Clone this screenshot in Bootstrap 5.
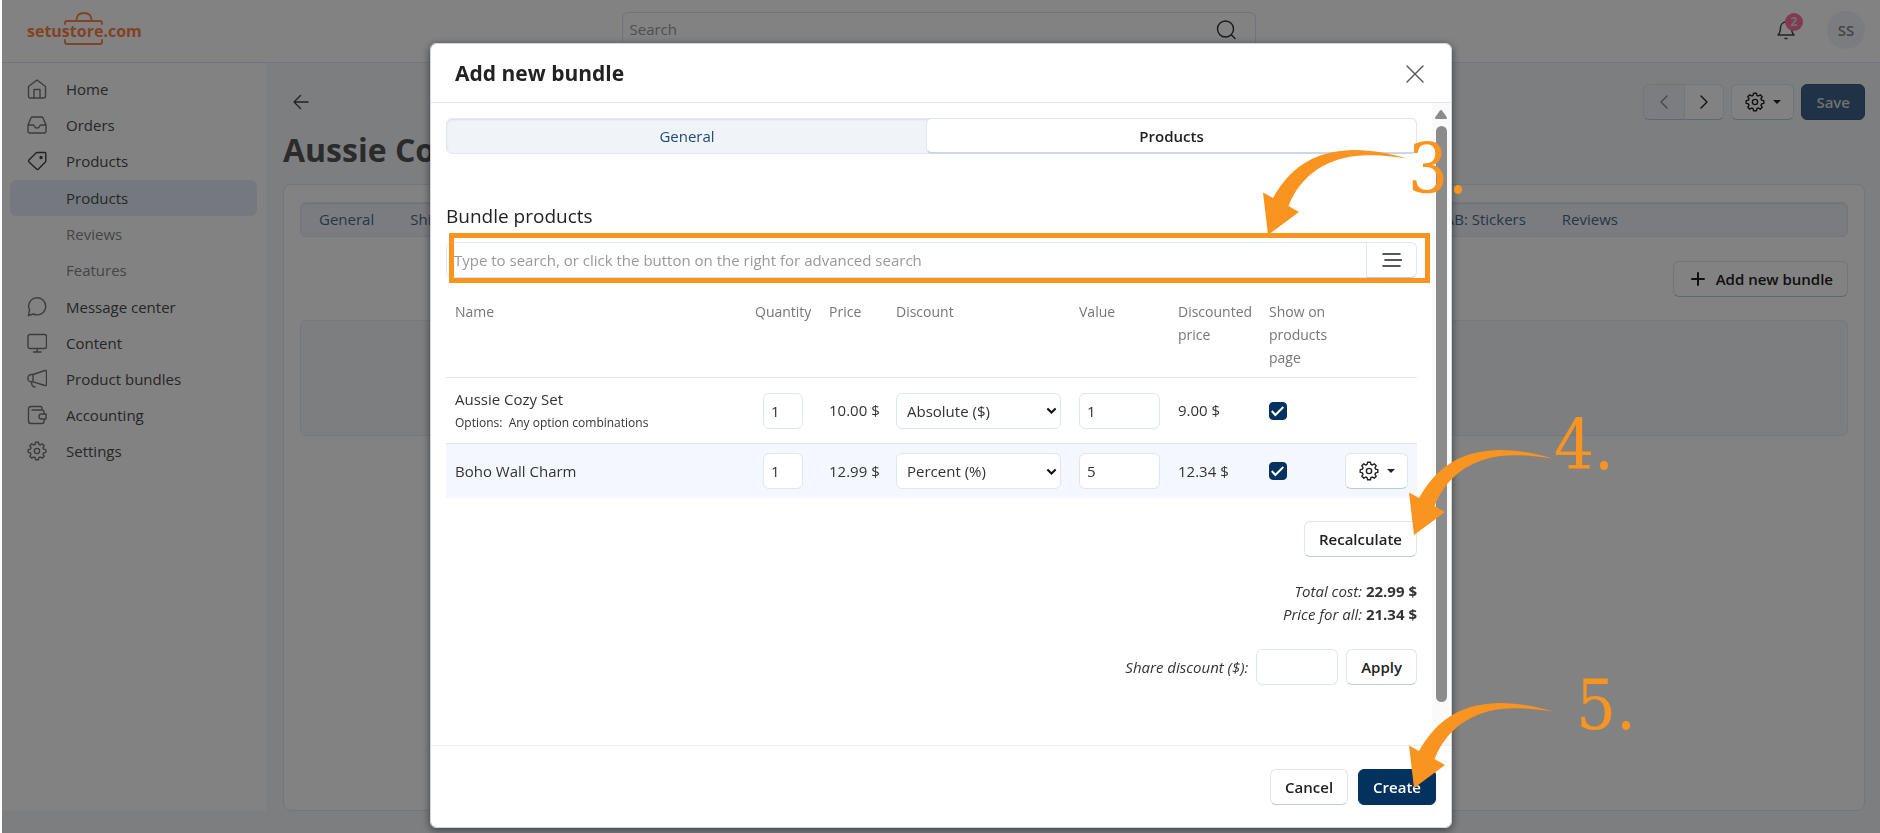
<!DOCTYPE html>
<html lang="en">
<head>
<meta charset="utf-8">
<meta name="viewport" content="width=device-width, initial-scale=1">
<title>Add new bundle</title>
<link href="https://cdn.jsdelivr.net/npm/bootstrap@5.3.0/dist/css/bootstrap.min.css" rel="stylesheet">
<style>
body{font-family:"Open Sans","Noto Sans",sans-serif;font-size:15px;line-height:23px;color:#333;background:#fff;padding-left:2px;overflow:hidden}
a{text-decoration:none}
.ico{width:20px;height:20px;fill:none;stroke:currentColor;stroke-width:1.4;stroke-linecap:round;stroke-linejoin:round;flex:none}
.shell{min-height:100vh;background:#f4f7fb;border-top:1px solid #fff;padding-bottom:22px}
.topbar{height:62px;border-bottom:1px solid #dfe5f2;background:#fff;padding:0 15px 4px 25px}
.brand{font-size:16px;font-weight:700;fill:#ff8248}
.searchbox{width:634px;height:36px;border:1px solid #dde4f0;border-radius:6px;padding:0 19px 0 7px;margin-right:46px}
.searchbox input{border:0;background:none;outline:0}
.searchbox input::placeholder{color:#9b9b9b}
.bell{margin:1px 31px 0 0}
.bell-count{left:9px;top:-7px;width:18px;height:18px;background:#ff73a6;color:#ddd;font-size:12px;font-weight:700;line-height:18px}
.avatar{width:38px;height:38px;background:#f0f3fb;line-height:38px;font-weight:600;color:#888}
.side{width:264px;background:#fff;padding:8px 9px 0 8px}
.side a{display:flex;align-items:center;height:36px;padding-left:17px;border-radius:6px;color:#4c4c4c;font-weight:500}
.side a .ico{margin-right:19px;color:#777}
.side .sub a{padding-left:56px;font-weight:400;color:#888}
.side .sub{margin:1px 0}
.side .sub a.active{background:#e6eef9;color:#4c4c4c;font-weight:500}
.main{padding:21px 15px 0 17px}
.btn-x{height:36px;border:1px solid #dfe5f0;border-bottom-color:#bccbe2;border-radius:6px;background:#fff;color:#222;font-size:15px;font-weight:600;padding:0 14px;line-height:20px;display:inline-flex;align-items:center;justify-content:center}
.caret{width:0;height:0;border:4px solid transparent;border-top:4px solid currentColor;border-bottom:0}
.bar{gap:7px}
.page-title{font-size:32px;line-height:44px;font-weight:700;color:#555;margin:8px 0 12px}
.panel{border:1px solid #e0e7f1;border-radius:8px;background:#fff;padding:17px 16px}
.strip{height:35px;background:#f1f4fa;border:1px solid #e3e8f1;border-radius:6px;box-shadow:inset 0 1px 2px #d9dee8}
.strip a{padding:5px 18px;color:#4d6a8a}
.strip a:last-child{margin-right:211px}
.empty{height:116px;background:#f4f7fb;border:1px solid #e6ecf6;border-radius:6px;margin-top:23px}
.shade{position:fixed;inset:0 0 0 2px;background:#000;opacity:.49}
.modal{left:2px;width:calc(100% - 2px)}
.dlg{max-width:1022px;margin:43px auto 0;height:calc(100vh - 48px)}
.modal-content{height:100%;border:1px solid #cdd5e0;border-radius:6px;box-shadow:0 2px 8px #0008;color:#333}
.modal-header{height:59px;padding:2px 26px 0 24px;border-color:#e0e7f1}
.modal-title{font-size:21px;font-weight:700;color:#222}
.modal-body{padding:15px 0 0 15px;overflow:hidden}
.modal-footer{height:82px;padding:0 15px;border-color:#ebeef2;gap:10px}
.modal-footer>*{margin:0}
.track{flex:none;width:18px;background:#fafafa;margin:-15px 1px 0 15px;padding-top:3px}
.thumb{width:11px;height:576px;background:#8b8b8b;border-radius:6px;margin-top:7px}
.tabs2{height:36px;background:#f0f4f9;border:1px solid #e3e8ef;border-radius:6px;box-shadow:inset 0 1px 2px #d9dee6}
.tabs2 a{line-height:34px;text-align:center;color:#1f4a78}
.tabs2 a:first-child{width:480px}
.tabs2 a.on{background:#fff;border:1px solid #dfe6f1;border-bottom:2px solid #cbd6e7;border-radius:6px;font-weight:600;color:#222;margin:-1px}
.sect{font-size:19px;font-weight:500;line-height:26px;margin:49px 0 13px;color:#222}
.form-control,.form-select{height:36px;border:1px solid #dfe6f3;border-radius:6px;font-size:15px;padding:0 7px;color:#333;line-height:20px}
.form-select{padding-left:7px}
.picker{margin-bottom:12px}
.picker .form-control::placeholder{color:#999}
.picker .form-control{border-radius:6px 0 0 6px}
.picker .btn-x{width:52px;border-radius:0 6px 6px 0;margin-left:-1px;border-color:#dfe6f3;border-bottom-color:#bccbe2}
.hilite{position:absolute;left:3px;right:-13px;top:-9px;height:50px;border:5px solid #f8941f;z-index:6;pointer-events:none}
.goods{table-layout:fixed;width:100%;margin:0}
.goods th{font-size:14px;font-weight:500;color:#777;padding:10px 9px 8px;vertical-align:top;line-height:23px;border-bottom:1px solid #dfe6f0}
.goods td{padding:9px;vertical-align:middle}
.goods .r1{height:66px;border-bottom:1px solid #dfe6f0}
.goods .hov{background:#f4f8fe}
.goods .opt{font-size:12px}
.qty{width:40px}
.form-select{padding-left:10px;background-size:11px 11px;background-position:right 3px center;background-image:url("data:image/svg+xml,%3csvg xmlns='http://www.w3.org/2000/svg' viewBox='0 0 16 16'%3e%3cpath fill='none' stroke='%23111' stroke-width='3' d='m2 5 6 6 6-6'/%3e%3c/svg%3e")}
.form-check-input{width:18px;height:18px;margin:0;display:block}
.form-check-input[type=checkbox]{border-radius:4px}
.form-check-input:checked[type=checkbox]{background-color:#04325f;border-color:#04325f;background-image:url("data:image/svg+xml,%3csvg xmlns='http://www.w3.org/2000/svg' viewBox='0 0 18 18'%3e%3cpath fill='none' stroke='%23fff' stroke-width='2.2' d='m2 9 4 4.500 9-9'/%3e%3c/svg%3e")}
.totals{margin-top:23px}
.share-in{width:82px}
.btn-navy{background:#04325f;border-color:#04325f;color:#fff}
.btn-save{background:#40638a;border-color:#365880;color:#ddd}
.notes{position:absolute;left:0;top:0;width:1240px;height:785px;overflow:visible;fill:#f8941f;pointer-events:none;z-index:7;font:70px "DejaVu Serif Condensed","DejaVu Serif",serif}
</style>
</head>
<body>
<svg class="d-none"><symbol id="gear" viewBox="0 0 20 20"><path d="M8.600 1.200h2.800l.5 2.200 1.400.6 1.900-1.200 2 2-1.200 1.900.6 1.400 2.200.5v2.800l-2.200.5-.6 1.400 1.200 1.900-2 2-1.900-1.200-1.400.6-.5 2.200H8.600l-.5-2.200-1.400-.6-1.900 1.200-2-2L4 13.300l-.6-1.400-2.200-.5V8.600l2.200-.5.6-1.400-1.200-1.900 2-2L6.700 4l1.400-.6z"/><circle cx="10" cy="10" r="2.600"/></symbol></svg>
<div class="shell d-flex flex-column">
  <header class="topbar d-flex align-items-center justify-content-between">
    <a href="#" aria-label="setustore.com"><svg class="d-block" width="120" height="36" viewBox="0 0 120 36"><g fill="none" stroke="#ff8248" stroke-width="1.800" stroke-linecap="round"><path d="M38 12v-1q0-2 2-2h33q2 0 2 2v1M38 28v2q0 2 2 2h33q2 0 2-2v-2M49.500 8q0-7 7.500-7t7.500 7"/></g><text class="brand" x="0" y="25">setustore.com</text></svg></a>
    <label class="searchbox d-flex align-items-center"><input class="flex-grow-1 p-0" type="text" placeholder="Search" aria-label="Search"><svg class="ico" viewBox="0 0 20 20" style="color:#333"><circle cx="9.500" cy="9" r="8"/><path d="m15.500 15 3.500 3.500"/></svg></label>
    <div class="d-flex align-items-center">
      <a href="#" class="bell position-relative" aria-label="Notifications"><svg class="ico d-block" viewBox="0 0 20 20" style="color:#444"><path d="M2 15h16c-2-2-2.500-4-2.500-7.500S13 2 10 2 4.500 4.500 4.500 7.500 4 13 2 15zM9 18.500h2"/></svg><span class="bell-count position-absolute rounded-circle text-center">2</span></a>
      <span class="avatar rounded-circle text-center">SS</span>
    </div>
  </header>
  <div class="d-flex flex-grow-1">
    <nav class="side">
      <a href="#"><svg class="ico" viewBox="0 0 20 20"><path d="M1.500 7.500 10 1l8.500 6.500V17q0 2-2 2h-13q-2 0-2-2zM7 19v-8.500h6V19"/></svg>Home</a>
      <a href="#"><svg class="ico" viewBox="0 0 20 20"><path d="M1 10 4 3q.5-1 1.500-1h9q1 0 1.500 1l3 7v6q0 2-2 2H3q-2 0-2-2zh5q1 0 1.500 1.500T10 13t2.500-1.500T14 10h5"/></svg>Orders</a>
      <a href="#"><svg class="ico" viewBox="0 0 20 20" style="color:#444"><path d="M10.500 1.500H18q.8 0 .8.800V10q0 .6-.4 1l-6.900 7q-1 1-2 0L2 11q-1-1 0-2l7-6.900q.6-.6 1.500-.6z"/><circle cx="14" cy="6.500" r="1" fill="currentColor"/></svg>Products</a>
      <div class="sub"><a href="#" class="active">Products</a><a href="#">Reviews</a><a href="#">Features</a></div>
      <a href="#"><svg class="ico" viewBox="0 0 20 20"><path d="M1.500 18.500 2.500 13A8.500 8.500 0 1 1 6.500 17z"/></svg>Message center</a>
      <a href="#"><svg class="ico" viewBox="0 0 20 20"><rect x="1" y="1.500" width="18.500" height="14" rx="2"/><path d="M10.200 15.500V19M6.500 19h7.500"/></svg>Content</a>
      <a href="#"><svg class="ico" viewBox="0 0 20 20"><path d="M6 5.500 18 1.500q1.500-.4 1.500 1v13q0 1.400-1.500 1L6 12.800zM6 5.500H4.500a3.600 3.600 0 0 0 0 7.300H6M4.500 13c0 3 1.500 5 3.500 5"/></svg>Product bundles</a>
      <a href="#"><svg class="ico" viewBox="0 0 20 20"><path d="M15 5V3q0-1.500-1.500-1.500h-9Q1.500 1.500 1.500 4v12q0 2.500 2.500 2.500h11q2 0 2-2V14M17 9V7q0-2-2-2H5M19 9h-4.500a2.500 2.500 0 0 0 0 5H19z"/></svg>Accounting</a>
      <a href="#"><svg class="ico"><use href="#gear"/></svg>Settings</a>
    </nav>
    <main class="main flex-grow-1 d-flex flex-column">
      <div class="d-flex align-items-center justify-content-between">
        <a href="#" class="ms-2" aria-label="Back"><svg class="ico d-block" viewBox="0 0 20 20" style="color:#444"><path d="M17 10H3m6.500-6.500L3 10l6.500 6.500"/></svg></a>
        <div class="bar d-flex">
          <div class="d-flex"><button class="btn-x rounded-end-0 border-end-0" style="width:41px;background:#f4f6fb" aria-label="Previous"><svg class="ico" viewBox="0 0 20 20" style="color:#888"><path d="m13 4-6 6 6 6"/></svg></button><button class="btn-x rounded-start-0" style="width:40px" aria-label="Next"><svg class="ico" viewBox="0 0 20 20"><path d="m7 4 6 6-6 6"/></svg></button></div>
          <button class="btn-x gap-2" style="width:63px" aria-label="Tools"><svg class="ico"><use href="#gear"/></svg><span class="caret"></span></button>
          <button class="btn-x btn-save">Save</button>
        </div>
      </div>
      <h1 class="page-title">Aussie Cozy Set</h1>
      <section class="panel flex-grow-1">
        <nav class="strip d-flex align-items-center"><a href="#">General</a><a href="#">Shipping</a><a href="#" class="ms-auto">AB: Stickers</a><a href="#">Reviews</a></nav>
        <div class="text-end mt-4"><button class="btn-x"><svg class="ico me-2" viewBox="0 0 20 20" style="stroke-width:2"><path d="M10 4v12M4 10h12"/></svg>Add new bundle</button></div>
        <div class="empty"></div>
      </section>
    </main>
  </div>
</div>
<div class="shade"></div>
<div class="modal d-block overflow-hidden" tabindex="-1" role="dialog" aria-labelledby="mt">
  <div class="dlg position-relative">
    <div class="modal-content">
      <div class="modal-header"><h2 class="modal-title" id="mt">Add new bundle</h2><button class="border-0 bg-transparent p-0 lh-1" aria-label="Close"><svg class="ico d-block" viewBox="0 0 20 20" style="color:#555"><path d="m2 2 16 16M18 2 2 18"/></svg></button></div>
      <div class="modal-body d-flex">
        <div class="flex-grow-1">
          <nav class="tabs2 d-flex"><a href="#">General</a><a href="#" class="on flex-grow-1">Products</a></nav>
          <h3 class="sect">Bundle products</h3>
          <div class="picker position-relative d-flex"><input class="form-control" type="text" aria-label="Product search" placeholder="Type to search, or click the button on the right for advanced search"><button class="btn-x" aria-label="Advanced search"><svg class="ico" viewBox="0 0 20 20" style="stroke-width:1.6"><path d="M1 4h17M3 10h17M1 16h17"/></svg></button><div class="hilite"></div></div>
          <table class="goods">
            <colgroup><col><col style="width:74px"><col style="width:67px"><col style="width:183px"><col style="width:99px"><col style="width:91px"><col style="width:76px"><col style="width:81px"></colgroup>
            <thead><tr><th>Name</th><th>Quantity</th><th>Price</th><th>Discount</th><th>Value</th><th>Discounted price</th><th>Show on products page</th><th></th></tr></thead>
            <tbody>
              <tr class="r1"><td>Aussie Cozy Set<div class="opt">Options:&nbsp; Any option combinations</div></td><td><input class="qty form-control mx-auto" value="1" aria-label="Quantity"></td><td class="text-nowrap">10.00 $</td><td><select class="form-select" aria-label="Discount"><option>Absolute ($)</option></select></td><td><input class="form-control" value="1" aria-label="Value"></td><td>9.00 $</td><td><input type="checkbox" class="form-check-input" checked aria-label="Show"></td><td></td></tr>
              <tr class="hov"><td>Boho Wall Charm</td><td><input class="qty form-control mx-auto" value="1" aria-label="Quantity"></td><td class="text-nowrap">12.99 $</td><td><select class="form-select" aria-label="Discount"><option>Percent (%)</option></select></td><td><input class="form-control" value="5" aria-label="Value"></td><td>12.34 $</td><td><input type="checkbox" class="form-check-input" checked aria-label="Show"></td><td><button class="btn-x gap-2 w-100 px-0" aria-label="Row tools"><svg class="ico"><use href="#gear"/></svg><span class="caret"></span></button></td></tr>
            </tbody>
          </table>
          <div class="text-end">
            <button class="btn-x totals">Recalculate</button>
            <div class="totals"><em>Total cost:</em> <b>22.99 $</b><br><em>Price for all:</em> <b>21.34 $</b></div>
            <div class="totals d-flex justify-content-end align-items-center"><label for="sd"><em>Share discount ($):</em></label><input id="sd" class="share-in form-control mx-2"><button class="btn-x">Apply</button></div>
          </div>
        </div>
        <div class="track d-flex flex-column align-items-center"><svg width="12" height="9" viewBox="0 0 12 9" class="mt-1"><path fill="#8b8b8b" d="M5 .5q1-1 2 0l5 7q0 1.500-1 1.500H1Q0 9 0 7.500z"/></svg><div class="thumb"></div></div>
      </div>
      <div class="modal-footer flex-nowrap"><button class="btn-x">Cancel</button><button class="btn-x btn-navy">Create</button></div>
    </div>
    <svg class="notes" viewBox="431 43 1240 785"><defs><path id="arrow" d="M1269 235 1264 192.500 1274 198C1290 170 1312 151 1354 150 1375 150 1392 154 1408 158.500 1392 156 1378 154.500 1363 155.500 1330 157 1302 174 1289.500 206L1300 212z"/></defs>
      <use href="#arrow"/><use href="#arrow" x="146" y="300"/><use href="#arrow" x="146" y="553"/>
      <text x="1409" y="193">3.</text><text x="1555" y="469">4.</text><text x="1577" y="729">5.</text></svg>
  </div>
</div>
<script src="https://cdn.jsdelivr.net/npm/bootstrap@5.3.0/dist/js/bootstrap.bundle.min.js"></script>
</body>
</html>
